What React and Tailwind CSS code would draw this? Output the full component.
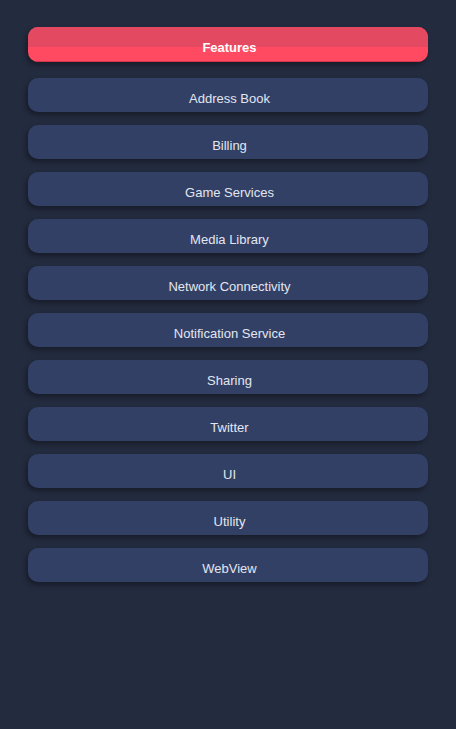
import React from "react";

const items = [
  "Address Book",
  "Billing",
  "Game Services",
  "Media Library",
  "Network Connectivity",
  "Notification Service",
  "Sharing",
  "Twitter",
  "UI",
  "Utility",
  "WebView",
];

export default function App() {
  return (
    <div className="w-[456px] h-[729px] bg-[#232b3e] px-[28px] pt-[27px]" style={{ fontFamily: '"Liberation Sans", Arial, sans-serif' }}>
      <div className="relative h-[35px] rounded-[10px] overflow-hidden shadow-[-2px_3px_5px_rgba(0,0,0,0.35)] bg-[#ff4a62] flex items-center justify-center">
        <div className="absolute inset-x-0 top-0 h-[20px] bg-[#e34a61]" />
        <div className="absolute inset-x-0 bottom-0 h-[1px] bg-[#d8344c]" />
        <span className="relative text-white font-bold text-[13px] pt-[6px] pl-[3px] leading-none">Features</span>
      </div>
      <div className="flex flex-col gap-[13px] mt-[16px]">
        {items.map((t) => (
          <div
            key={t}
            className="h-[34px] rounded-[10px] bg-[#334066] shadow-[-2px_3px_5px_rgba(0,0,0,0.35)] flex items-center justify-center text-[13px] text-[#e2e6f0] pt-[10px] pb-[4px] pl-[3px]"
          >
            <span className="leading-none">{t}</span>
          </div>
        ))}
      </div>
    </div>
  );
}
